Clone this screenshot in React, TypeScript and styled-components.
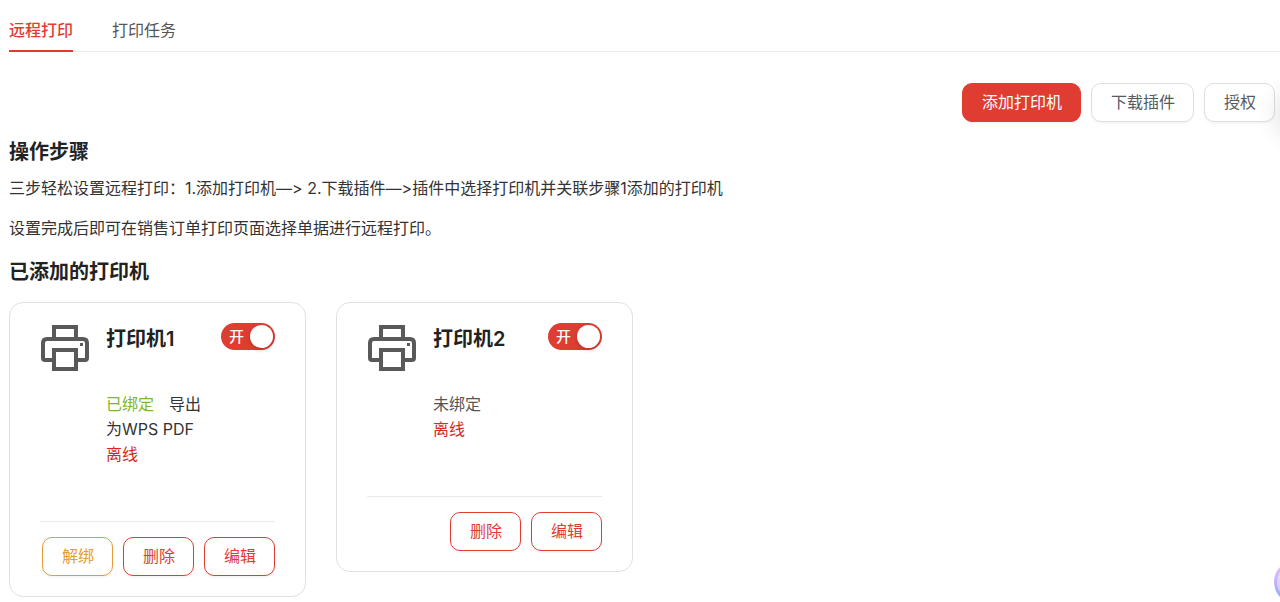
import React, { useState } from "react";
import styled, { createGlobalStyle } from "styled-components";

const fontStack = `Inter, "Noto Sans CJK SC", sans-serif`;

const red = "#df3c32";

const GlobalStyle = createGlobalStyle`
  * {
    box-sizing: border-box;
  }
  body {
    margin: 0;
    background: #fff;
    color: #333;
    font-family: ${fontStack};
    font-size: 16px;
    line-height: 24px;
    font-variant-ligatures: no-contextual;
    overflow-x: hidden;
  }
  button,
  input {
    font: inherit;
  }
`;

const Page = styled.main`
  padding: 8px 0 5px 9px;
`;

const Tabs = styled.nav`
  display: flex;
  gap: 39px;
  border-bottom: 1px solid #eaeaec;
`;

const Tab = styled.a<{ $active?: boolean }>`
  padding: 10px 0 8px;
  margin-bottom: -1px;
  border-bottom: 2px solid ${(p) => (p.$active ? red : "transparent")};
  color: ${(p) => (p.$active ? red : "#555")};
  font-weight: ${(p) => (p.$active ? 500 : 400)};
  text-decoration: none;
`;

const Toolbar = styled.div`
  display: flex;
  justify-content: flex-end;
  gap: 10px;
  padding: 31px 5px 0 0;
`;

const tones = {
  primary: { text: "#fff", border: red, fill: red },
  plain: { text: "#535b63", border: "#dcdee3", fill: "#fff" },
  danger: { text: red, border: red, fill: "#fff" },
  warning: { text: "#e79a35", border: "#e79a35", fill: "#fff" },
};

const Button = styled.button<{ $tone: keyof typeof tones }>`
  height: 39px;
  padding: 0 18px 1px 19px;
  border: 1px solid ${(p) => tones[p.$tone].border};
  border-radius: 10px;
  background: ${(p) => tones[p.$tone].fill};
  color: ${(p) => tones[p.$tone].text};
  box-shadow: 0 2px 2px rgba(0, 0, 0, 0.04);
  white-space: nowrap;
  cursor: pointer;
`;

const SectionTitle = styled.h2`
  margin: 0;
  padding: 15px 0 9px;
  color: #222;
  font-size: 20px;
  line-height: 30px;
  font-weight: 600;
`;

const Steps = styled.div`
  display: grid;
  gap: 16px;
  padding-bottom: 2px;
`;

const Step = styled.p`
  margin: 0;
`;

const Cards = styled.section`
  display: flex;
  flex-wrap: wrap;
  align-items: flex-start;
  gap: 30px;
  margin-top: 6px;
`;

const Card = styled.article`
  width: 297px;
  padding: 19px 30px 20px;
  border: 1px solid #dee1e6;
  border-radius: 14px;
`;

const CardBody = styled.div`
  display: grid;
  grid-template-columns: 50px 1fr auto;
  column-gap: 16px;
  align-items: start;
  padding-bottom: 54px;
`;

const PrinterGlyph = styled.svg`
  width: 50px;
  height: 50px;
  margin-top: 1px;
`;

const PrinterName = styled.h3`
  margin: 0;
  color: #222;
  font-size: 20px;
  line-height: 34px;
  font-weight: 600;
`;

const Status = styled.div`
  grid-column: 2;
  margin-top: 19px;
  line-height: 25px;
`;

const StatusText = styled.span<{ $color: string }>`
  color: ${(p) => p.$color};
`;

const Driver = styled.span`
  margin-left: 15px;
`;

const SwitchTrack = styled.label`
  display: flex;
  align-items: center;
  justify-content: space-between;
  width: 54px;
  height: 27px;
  padding: 0 2px 0 8px;
  margin-top: 1px;
  border-radius: 14px;
  background: #bfbfbf;
  color: #fff;
  font-size: 15px;
  font-weight: 500;
  cursor: pointer;

  &:has(input:checked) {
    background: ${red};
  }
  &:has(input:not(:checked)) {
    flex-direction: row-reverse;
    padding: 0 8px 0 2px;
  }
`;

const SwitchInput = styled.input`
  appearance: none;
  width: 23px;
  height: 23px;
  margin: 0;
  border-radius: 50%;
  background: #fff;
  box-shadow: 0 2px 4px rgba(0, 35, 11, 0.2);
  cursor: pointer;
`;

const CardActions = styled.footer`
  display: flex;
  justify-content: flex-end;
  gap: 10px;
  padding-top: 15px;
  border-top: 1px solid #eaeaec;
`;

const DrawerShadow = styled.div`
  position: fixed;
  top: 92px;
  left: 100%;
  width: 40px;
  height: 44px;
  border-radius: 20px;
  box-shadow: 0 0 26px rgba(0, 0, 0, 0.16);
`;

const Assistant = styled.button`
  position: fixed;
  right: -38px;
  bottom: -2px;
  width: 44px;
  height: 44px;
  padding: 3px;
  border: 0;
  border-radius: 50%;
  background: linear-gradient(180deg, #e9c0fb 0%, #c7b2fb 50%, #7fa6fb 100%);
  cursor: pointer;

  &::before {
    content: "";
    display: block;
    height: 100%;
    border-radius: 50%;
    background: linear-gradient(180deg, #f3e4fd, #d9d2f8 60%, #c4d3fc);
  }
`;

function PrinterIcon() {
  return (
    <PrinterGlyph viewBox="0 0 50 50" fill="none" stroke="#595959" strokeWidth="4" aria-hidden="true">
      <path d="M14 16V4H36V16" />
      <path d="M14 37H5Q3 37 3 35V20Q3 16 7 16H43Q47 16 47 20V35Q47 37 45 37H36" />
      <path d="M14 27H36V46H14Z" />
      <path d="M40 21.5H43" strokeWidth="3" />
    </PrinterGlyph>
  );
}

function Switch({ label }: { label: string }) {
  const [on, setOn] = useState(true);
  return (
    <SwitchTrack>
      {on ? "开" : "关"}
      <SwitchInput type="checkbox" role="switch" aria-label={label} checked={on} onChange={() => setOn(!on)} />
    </SwitchTrack>
  );
}

type Printer = { name: string; bound: boolean; driver?: string };

const printers: Printer[] = [
  { name: "打印机1", bound: true, driver: "导出为WPS PDF" },
  { name: "打印机2", bound: false },
];

function PrinterCard({ name, bound, driver }: Printer) {
  return (
    <Card>
      <CardBody>
        <PrinterIcon />
        <PrinterName>{name}</PrinterName>
        <Switch label={name} />
        <Status>
          <StatusText $color={bound ? "#7db52f" : "#555"}>{bound ? "已绑定" : "未绑定"}</StatusText>
          {driver && <Driver>{driver}</Driver>}
          <br />
          <StatusText $color="#cf2a27">离线</StatusText>
        </Status>
      </CardBody>
      <CardActions>
        {bound && <Button $tone="warning">解绑</Button>}
        <Button $tone="danger">删除</Button>
        <Button $tone="danger">编辑</Button>
      </CardActions>
    </Card>
  );
}

export default function App() {
  return (
    <>
      <GlobalStyle />
      <Page>
        <Tabs>
          <Tab href="#remote" $active>远程打印</Tab>
          <Tab href="#tasks">打印任务</Tab>
        </Tabs>
        <Toolbar>
          <Button $tone="primary">添加打印机</Button>
          <Button $tone="plain">下载插件</Button>
          <Button $tone="plain">授权</Button>
        </Toolbar>
        <SectionTitle>操作步骤</SectionTitle>
        <Steps>
          <Step>三步轻松设置远程打印：1.添加打印机—&gt; 2.下载插件—&gt;插件中选择打印机并关联步骤1添加的打印机</Step>
          <Step>设置完成后即可在销售订单打印页面选择单据进行远程打印。</Step>
        </Steps>
        <SectionTitle>已添加的打印机</SectionTitle>
        <Cards>
          {printers.map((p) => (
            <PrinterCard key={p.name} {...p} />
          ))}
        </Cards>
      </Page>
      <DrawerShadow />
      <Assistant aria-label="智能助手" />
    </>
  );
}
